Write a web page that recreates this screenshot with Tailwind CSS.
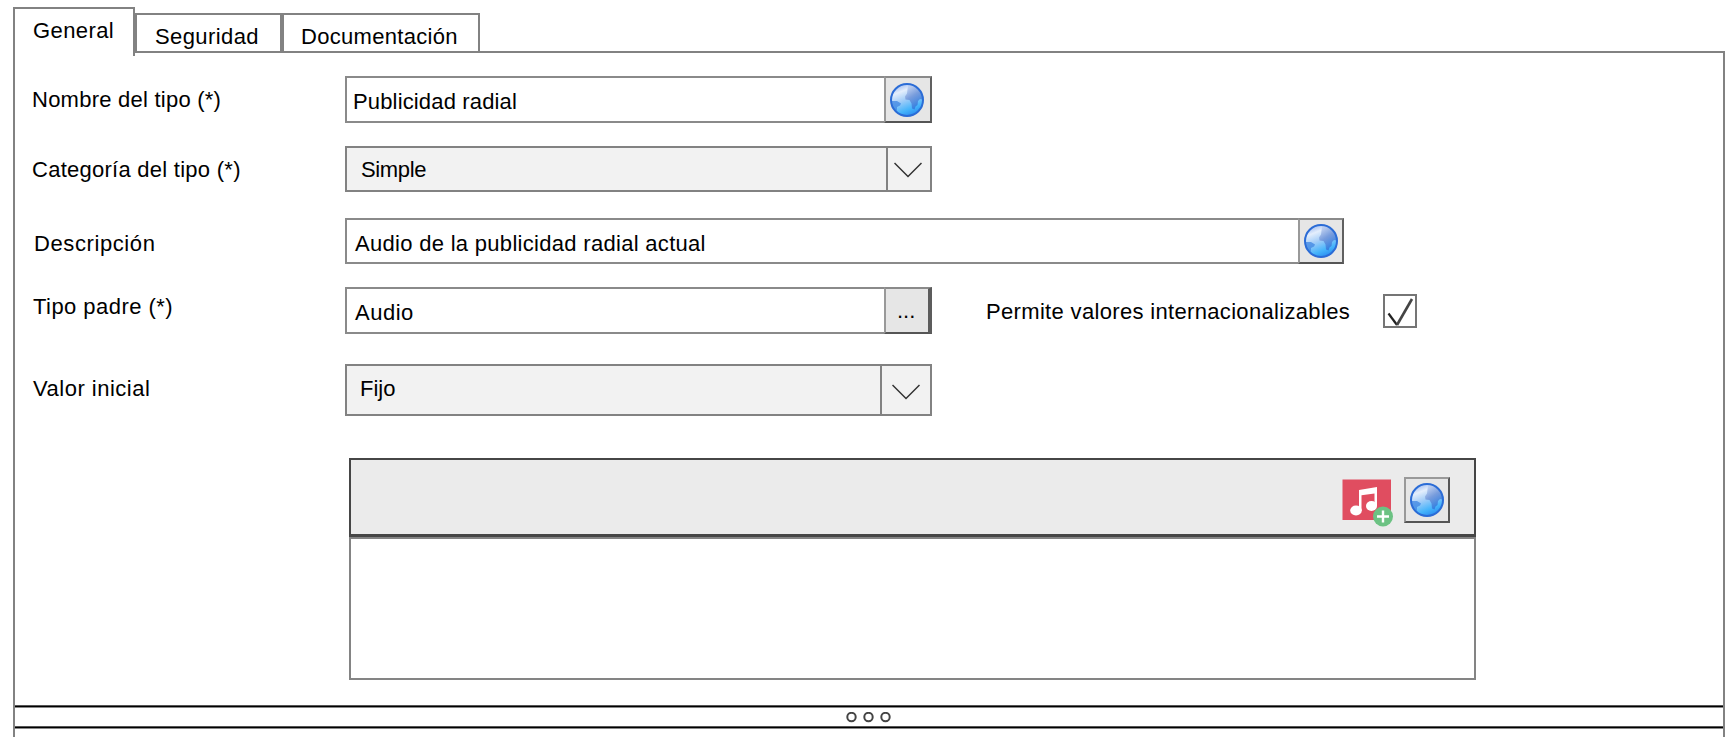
<!DOCTYPE html>
<html lang="es"><head><meta charset="utf-8"><title>Tipo</title>
<script src="https://cdn.jsdelivr.net/npm/@tailwindcss/browser@4"></script></head>
<body class="bg-white text-black text-[22px] leading-[24px] whitespace-nowrap font-['Liberation_Sans',sans-serif]">
<svg class="absolute h-0 w-0">
<defs>
<linearGradient id="sea" x1="0.2" y1="0" x2="0.7" y2="1"><stop offset="0" stop-color="#c3d3f2"/><stop offset="0.45" stop-color="#7094d8"/><stop offset="1" stop-color="#2470dc"/></linearGradient>
<linearGradient id="land" x1="0.2" y1="0" x2="0.6" y2="1"><stop offset="0" stop-color="#8fb0ee"/><stop offset="0.25" stop-color="#e4eefc"/><stop offset="0.5" stop-color="#a3cdf8"/><stop offset="0.8" stop-color="#45b4fb"/><stop offset="1" stop-color="#2b8df0"/></linearGradient>
</defs>
<symbol id="globe" viewBox="0 0 36 36">
<circle cx="18" cy="18" r="16.300" fill="url(#land)"/>
<path d="M19 3c8 .5 13 5 15 11.500v3l-3-.500-2 2-.500 4-2 1.500-1 3-2.500-1-.500-5-2-3.500-4-.500-.500-3 2-3z" fill="url(#sea)" opacity=".85"/>
<path d="M2 19h6l4 2.500-1 2-3 1.500v4c-3.500-2.500-5.500-5-6-10z" fill="#3f86e2" opacity=".75"/>
<circle cx="18" cy="18" r="16" fill="none" stroke="#2b6cd6" stroke-width="2"/>
</symbol>
</svg>
<div class="flex h-[737px] flex-col overflow-hidden pt-[7px] pl-[13px]">
 <div class="relative z-10 flex h-[46px] items-end">
  <div class="mb-[-3px] h-[49px] w-[122px] shrink-0 border-2 border-b-0 border-[#828282] bg-white pt-[10px] pl-[18px] tracking-[.4px]">General</div>
  <div class="h-10 w-[147px] border-2 border-[#828282] bg-white pt-[10px] pl-[18px] tracking-[.4px]">Seguridad</div>
  <div class="h-10 w-[198px] border-2 border-[#828282] bg-white pt-[10px] pl-[17px] tracking-[.3px]">Documentación</div>
 </div>
 <div class="mt-[-2px] w-[1712px] flex-1 border-2 border-b-0 border-[#828282] pt-[23px]">
  <div class="flex h-[47px]">
   <div class="w-[330px] pt-3 pl-[17px] tracking-[.24px]">Nombre del tipo (*)</div>
   <div class="w-[539px] border-2 border-r-0 border-[#8a8a8a] pt-3 pl-[6px] tracking-[.15px]">Publicidad radial</div>
   <div class="flex w-12 items-center justify-center border-2 border-t-[#8a8a8a] border-r-[#606060] border-b-[#555] border-l-[#999] bg-[#e6e6e6] pr-[2px]"><svg class="h-9 w-9"><use href="#globe"/></svg></div>
  </div>
  <div class="mt-[23px] flex h-[46px]">
   <div class="w-[330px] pt-3 pl-[17px] tracking-[.26px]">Categoría del tipo (*)</div>
   <div class="w-[541px] border-2 border-r-0 border-[#828282] bg-[#f2f2f2] pt-[10px] pl-[14px] tracking-[-.35px]">Simple</div>
   <div class="flex w-[46px] items-center justify-center border-2 border-[#828282] bg-[#f2f2f2] pr-[2px]"><svg class="mt-[2px] h-4 w-7" viewBox="0 0 28 16" fill="none" stroke="#333" stroke-width="1.500"><path d="M0.500 1L14 14.500L27.500 1"/></svg></div>
  </div>
  <div class="mt-[26px] flex h-[46px]">
   <div class="w-[330px] pt-[14px] pl-[19px] tracking-[.6px]">Descripción</div>
   <div class="w-[953px] border-2 border-r-0 border-[#8a8a8a] pt-3 pl-[8px] tracking-[.3px]">Audio de la publicidad radial actual</div>
   <div class="flex w-[46px] items-center justify-center border-2 border-t-[#8a8a8a] border-r-[#606060] border-b-[#555] border-l-[#999] bg-[#e6e6e6]"><svg class="h-9 w-9"><use href="#globe"/></svg></div>
  </div>
  <div class="mt-[23px] flex h-[47px]">
   <div class="w-[330px] pt-2 pl-[18px] tracking-[.45px]">Tipo padre (*)</div>
   <div class="w-[539px] border-2 border-r-0 border-[#8a8a8a] pt-3 pl-[8px] tracking-[.5px]">Audio</div>
   <div class="w-12 border-2 border-r-4 border-t-[#8a8a8a] border-r-[#5c5c5c] border-b-[#555] border-l-[#999] bg-[#e6e6e6] pt-[10px] pl-[11px]">...</div>
   <div class="w-[450px] pt-[13px] pl-[54px] tracking-[.33px]">Permite valores internacionalizables</div>
   <div class="mt-[7px] ml-px h-[34px] w-[34px] border-2 border-[#757575]"><svg class="h-[30px] w-[30px]" viewBox="0 0 30 30" fill="none" stroke-linejoin="round"><path d="M3.500 17.500L12 29" stroke="#222" stroke-width="2.200"/><path d="M12 29L27 3" stroke="#444" stroke-width="2.600"/></svg></div>
  </div>
  <div class="mt-[30px] flex h-[52px]">
   <div class="w-[330px] pt-[13px] pl-[18px] tracking-[.5px]">Valor inicial</div>
   <div class="w-[535px] border-2 border-r-0 border-[#828282] bg-[#f2f2f2] pt-[11px] pl-[13px]">Fijo</div>
   <div class="flex w-[52px] items-center justify-center border-2 border-[#828282] bg-[#f2f2f2]"><svg class="mt-[3px] h-4 w-7" viewBox="0 0 28 16" fill="none" stroke="#333" stroke-width="1.500"><path d="M0.500 1L14 14.500L27.500 1"/></svg></div>
  </div>
  <div class="mt-[42px] ml-[334px] w-[1127px]">
   <div class="flex h-[79px] items-start border-2 border-b-[3px] border-[#464646] bg-[#ebebeb] pt-[17px] pl-[991px]">
    <svg class="mt-[2px] h-[50px] w-[54px]" viewBox="0 0 54 50"><path d="M0.500 0.500h48.500v40.500H0.500z" fill="#e04d60"/><g fill="#fff"><ellipse cx="14" cy="31.500" rx="5.800" ry="5"/><ellipse cx="29.500" cy="27" rx="5.500" ry="5"/><path d="M17 11l18-3v19h-2.500V14.500l-13 1.800V32H17z"/></g><circle cx="41" cy="37.500" r="10" fill="#6cc283"/><path d="M35 37.500h12M41 31.500v12" stroke="#fff" stroke-width="2.400"/></svg>
    <div class="ml-2 flex h-[46px] w-[46px] items-center justify-center border-2 border-t-[#999] border-r-[#555] border-b-[#555] border-l-[#999] bg-[#e6e6e6]"><svg class="h-9 w-9"><use href="#globe"/></svg></div>
   </div>
   <div class="h-[143px] border-2 border-[#848484]"></div>
  </div>
  <div class="mt-[25px] h-[3px] border-y border-t-[#555] border-b-[#888] bg-black"></div>
  <div class="flex h-[18px] justify-center pt-1 pr-[1px]"><svg class="h-[11px] w-[45px]" viewBox="0 0 45 11" fill="none" stroke="#444" stroke-width="2"><circle cx="5.500" cy="5" r="4.200"/><circle cx="22.500" cy="5" r="4.200"/><circle cx="39.500" cy="5" r="4.200"/></svg></div>
  <div class="h-[3px] border-y border-t-[#555] border-b-[#888] bg-black"></div>
 </div>
</div>
</body></html>
